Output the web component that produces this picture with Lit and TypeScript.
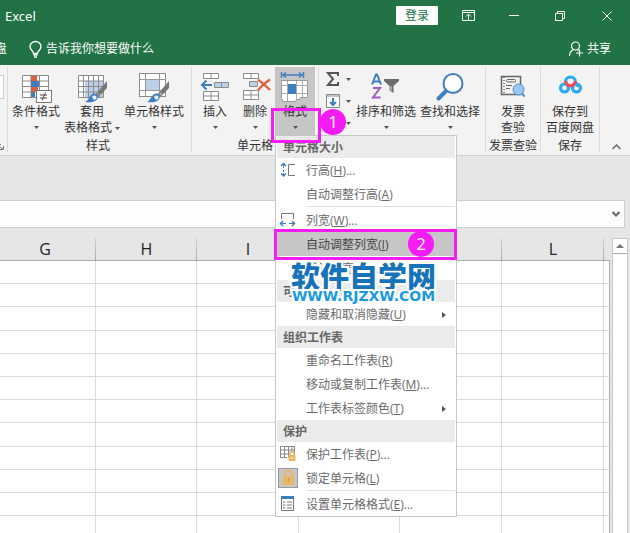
import { LitElement, html, css, svg, nothing } from "lit";
import { customElement } from "lit/decorators.js";

const gridPath = (x: number, y: number, cw: number, ch: number, cols: number, rows: number) => {
  let d = "";
  for (let i = 0; i <= cols; i++) d += `M${x + i * cw} ${y}v${ch * rows}`;
  for (let j = 0; j <= rows; j++) d += `M${x} ${y + j * ch}h${cw * cols}`;
  return d;
};

const brush = svg`
  <path d="M31 7v7l-6.500 7-3-3z" fill="#777"/>
  <path d="M21 18.500l3.500 3-1.500 2-4-3.500z" fill="#8a8a8a"/>
  <path d="M9 28c4-1 4-8 9-8.500 4 0 5 4 2.500 6.500S13 28.500 9 28z" fill="#3f7fbf"/>
  <path d="M16 23c1-2 4-2 4.500 0s-1.500 3-3 2.500z" fill="#e6f0fa"/>`;

const icons: Record<string, unknown> = {
  cond: html`<svg width="32" height="30" viewBox="0 0 32 30" aria-hidden="true">
    <rect x="2.500" y="1.500" width="26" height="22" fill="#fff"/>
    <path d="M2.500 1.500h26v22h-26zM11 1v23M19.500 1v23M2 7h9M2 12.500h9M2 18h9M17 7h12M19 12.500h10" fill="none" stroke="#8b8b8b"/>
    <rect x="11" y="2" width="6" height="5" fill="#d9603b"/><rect x="11" y="7" width="8" height="6" fill="#3f7fbf"/>
    <rect x="11" y="13" width="7" height="5" fill="#d9603b"/><rect x="11" y="18" width="4" height="5" fill="#3f7fbf"/>
    <rect x="16.500" y="16.500" width="15" height="12" fill="#fff" stroke="#777"/>
    <path d="M20 21h7M20 24h7M25.500 18.500l-3.500 8" stroke="#444" fill="none"/></svg>`,
  table: html`<svg width="32" height="30" viewBox="0 0 32 30" aria-hidden="true">
    <rect x="2.500" y="1.500" width="25" height="22" fill="#fff"/><rect x="9" y="7" width="18" height="16" fill="#bcd0e8"/>
    <path d=${gridPath(2.5, 1.5, 5, 5.5, 5, 4)} stroke="#8b8b8b" fill="none"/>${brush}</svg>`,
  style: html`<svg width="32" height="30" viewBox="0 0 32 30" aria-hidden="true">
    <rect x="1.500" y="-.5" width="26" height="23" fill="#fff" stroke="#8b8b8b"/>
    <path d="M7.500 0v22M21.500 0v22M2 5.500h26M2 16.500h26" stroke="#999" fill="none"/>
    <rect x="8" y="6" width="13" height="10" fill="#bcd0e8"/>${brush}</svg>`,
  insert: html`<svg width="32" height="30" viewBox="0 0 32 30" aria-hidden="true">
    <path d="M4.500-.5h15v5h-15zM12-.5v5M4.500 17.500h15v9h-15zM12 17.500v9M4.500 22h15" fill="#fff" stroke="#8b8b8b"/>
    <path d="M15.500 8.500h14v5h-14z" fill="#bcd0e8" stroke="#8b8b8b"/><path d="M22.500 8.500v5" stroke="#8b8b8b"/>
    <path d="M13 11H3.500M7.500 6.500L3 11l4.500 4.500" fill="none" stroke="#3f7fbf" stroke-width="2"/></svg>`,
  remove: html`<svg width="32" height="30" viewBox="0 0 32 30" aria-hidden="true">
    <path d="M4.500-.5h15v5h-15zM12-.5v5M4.500 16.500h15v9h-15zM12 16.500v9M4.500 21h15" fill="#fff" stroke="#8b8b8b"/>
    <path d="M10.500 7.500h8v5h-8z" fill="#bcd0e8" stroke="#8b8b8b"/>
    <path d="M19 5.500C23 9 27 12 31 16M31 5.500C26 9 22 12 19 16.500" fill="none" stroke="#d9603b" stroke-width="2.200"/></svg>`,
  format: html`<svg width="32" height="30" viewBox="0 0 32 30" aria-hidden="true">
    <path d="M2.500-2v6M24.500-2v6M4 1h19M7-1.500L4 1l3 2.500M20-1.500L23 1l-3 2.500" fill="none" stroke="#3f7fbf" stroke-width="1.500"/>
    <path d="M2.500 6.500h26v17h-7l-1 2h-3l-1 2H4l-1.500-3z" fill="#fff" stroke="#999"/>
    <path d="M8.500 7v20M17.500 7v18M23.500 7v16M3 11.500h25M3 19.500h25" stroke="#aaa" fill="none"/>
    <rect x="9" y="10" width="8" height="10" fill="#3f7fbf"/></svg>`,
  sort: html`<svg width="32" height="30" viewBox="0 0 32 30" aria-hidden="true">
    <path d="M2 10.500L6 .5h1l4 10M3.500 7.500h6" fill="none" stroke="#3f7fbf" stroke-width="2"/>
    <path d="M3 14h7L3 23.500h7.500" fill="none" stroke="#9b5fc0" stroke-width="2"/>
    <path d="M14 5h15v2l-5.500 5v7l-4-2.500V12L14 7z" fill="#6d6d6d"/><path d="M21 12v5" stroke="#ddd"/></svg>`,
  find: html`<svg width="32" height="30" viewBox="0 0 32 30" aria-hidden="true">
    <path d="M12.500 16.500L4.500 24.500" stroke="#3f7fbf" stroke-width="4" stroke-linecap="round"/>
    <circle cx="19" cy="9.500" r="9.500" fill="#fff" stroke="#3f7fbf" stroke-width="2"/></svg>`,
  invoice: html`<svg width="32" height="30" viewBox="0 0 32 30" aria-hidden="true">
    <path d="M4.500 2.500h19v18h-19z" fill="#f3f3f3" stroke="#666" stroke-width="1.500"/>
    <path d="M7 3v17" stroke="#666" stroke-dasharray="1 2" stroke-width="1.500"/>
    <rect x="9.500" y="5.500" width="9" height="2.500" rx="1" fill="none" stroke="#666"/><path d="M9 11.500h6M9 14.500h4" stroke="#666"/>
    <circle cx="21.500" cy="15.500" r="5.500" fill="#9cc7ee" stroke="#4a8fc9"/><path d="M25 19.500l2.500 3" stroke="#4a8fc9" stroke-width="2"/></svg>`,
  netdisk: html`<svg width="32" height="30" viewBox="0 0 32 30" aria-hidden="true" fill="none" stroke-width="3.200">
    <path d="M11.500 8a5 5 0 0 1 10 0c0 2.500 2 3.500 3.500 4" stroke="#2aaaf0"/>
    <circle cx="10.500" cy="14" r="4" stroke="#2aaaf0"/><circle cx="22.500" cy="14" r="4" stroke="#2aaaf0"/>
    <path d="M11.700 7a4.800 4.800 0 1 0 9.600 0" stroke="#ee4b62"/></svg>`,
  rowH: html`<svg width="24" height="20" viewBox="0 0 24 20" aria-hidden="true" fill="none">
    <path d="M7.500 3v11" stroke="#3f7fbf" stroke-dasharray="4 2 2 1"/><path d="M5 5l2.500-2.500L10 5M5 12.500L7.500 15l2.500-2.500" stroke="#3f7fbf" stroke-width="1.500"/>
    <path d="M19 3.500h-6.500v11H19" stroke="#777"/></svg>`,
  colW: html`<svg width="24" height="20" viewBox="0 0 24 20" aria-hidden="true" fill="none">
    <path d="M5.500 8V2.500h12V8" stroke="#777"/><path d="M5 12.500h5M13 12.500h5" stroke="#3f7fbf"/>
    <path d="M7 10l-2.500 2.500L7 15M16 10l2.500 2.500L16 15" stroke="#3f7fbf" stroke-width="1.500"/></svg>`,
  sheet: html`<svg width="24" height="20" viewBox="0 0 24 20" aria-hidden="true">
    <path d="M4.500 1.500h14v9M4.500 1.500v11M8.500 1.500v11M12.500 1.500v11M16 1.500v6M4 5h15M4 9h9M4 12.500h7" fill="none" stroke="#888"/>
    <rect x="12.500" y="10" width="7" height="6" fill="#eab765"/><path d="M14 10V8.500a2 2 0 0 1 4 0V10" fill="none" stroke="#eab765" stroke-width="1.500"/><path d="M16 12v2" stroke="#fff"/></svg>`,
  lock: html`<svg width="24" height="20" viewBox="0 0 24 20" aria-hidden="true">
    <rect x="2.500" y="-.5" width="19" height="19" fill="#c6c6c6" stroke="#9a9a9a"/>
    <rect x="7" y="7" width="11" height="9" fill="#eab765"/><path d="M9 7V5.500a3.500 3.500 0 0 1 7 0V7" fill="none" stroke="#eab765" stroke-width="2"/><path d="M12.500 9v4" stroke="#c9a15e" stroke-width="1.500"/></svg>`,
  cells: html`<svg width="24" height="20" viewBox="0 0 24 20" aria-hidden="true">
    <path d="M5.500 2.500h12v13h-12z" fill="#fff" stroke="#777"/><path d="M5 2.500h13" stroke="#3f7fbf" stroke-width="3"/>
    <path d="M7 7h2.500M7 10h2.500M7 13h2.500M11 7h5M11 10h5M11 13h5" stroke="#777"/></svg>`,
};

const arrow = html`<svg class="arrow" width="5" height="3" viewBox="0 0 5 3" aria-hidden="true"><path d="M0 0h5L2.500 3z" fill="#555"/></svg>`;

type Entry =
  | { kind: "head"; text: string }
  | { kind: "sep" }
  | { kind: "item"; text: string; key: string; dots?: boolean; icon?: string; sub?: boolean; active?: boolean };

const entries: Entry[] = [
  { kind: "head", text: "单元格大小" },
  { kind: "item", text: "行高", key: "H", dots: true, icon: "rowH" },
  { kind: "item", text: "自动调整行高", key: "A" },
  { kind: "sep" },
  { kind: "item", text: "列宽", key: "W", dots: true, icon: "colW" },
  { kind: "item", text: "自动调整列宽", key: "I", active: true },
  { kind: "item", text: "默认列宽", key: "D", dots: true },
  { kind: "head", text: "可见性" },
  { kind: "item", text: "隐藏和取消隐藏", key: "U", sub: true },
  { kind: "head", text: "组织工作表" },
  { kind: "item", text: "重命名工作表", key: "R" },
  { kind: "item", text: "移动或复制工作表", key: "M", dots: true },
  { kind: "item", text: "工作表标签颜色", key: "T", sub: true },
  { kind: "head", text: "保护" },
  { kind: "item", text: "保护工作表", key: "P", dots: true, icon: "sheet" },
  { kind: "item", text: "锁定单元格", key: "L", icon: "lock" },
  { kind: "sep" },
  { kind: "item", text: "设置单元格格式", key: "E", dots: true, icon: "cells" },
];

@customElement("format-menu")
class FormatMenu extends LitElement {
  static styles = css`
    :host { display: block; color: #6a6a6a; }
    .menu { box-sizing: border-box; width: 182px; background: #fff; border: 1px solid #c6c6c6; }
    .head { box-sizing: border-box; height: 22px; line-height: 22px; margin: 0 1px; padding: 1px 0 0 6px; background: #ebebeb; font-weight: 700; color: #666; }
    .sep { height: 1px; margin: 0 1px 1px 31px; background: #e1e1e1; }
    .row { position: relative; }
    .item { box-sizing: border-box; display: flex; align-items: center; gap: 6px; width: 100%; height: 24px; padding: 2px 10px 0 0; border: 0; background: none; font: inherit; color: inherit; text-align: left; white-space: nowrap; }
    .icon { flex: none; display: flex; width: 24px; height: 20px; }
    .icon svg { overflow: visible; }
    .label { flex: 1; font-family: "Open Sans", "Noto Sans CJK SC", sans-serif; }
    .active .item { background: #c6c6c6; color: #444; }
    .mark { position: absolute; inset: -3px -1px -4px -2px; border: 3px solid #f51bf5; pointer-events: none; }
    .badge { position: absolute; right: 22px; top: -1px; width: 26px; height: 26px; border-radius: 50%; background: #f51bf5; color: #fff; font-size: 16px; line-height: 26px; text-align: center; }
  `;
  render() {
    return html`<div class="menu" role="menu">${entries.map((e) => {
      if (e.kind === "head") return html`<div class="head">${e.text}</div>`;
      if (e.kind === "sep") return html`<div class="sep" role="separator"></div>`;
      return html`<div class="row ${e.active ? "active" : ""}">
        <button class="item" role="menuitem"><span class="icon">${e.icon ? icons[e.icon] : nothing}</span><span class="label">${e.text}(<u>${e.key}</u>)${e.dots ? "..." : ""}</span>${e.sub
          ? html`<svg width="4" height="6" viewBox="0 0 4 6" aria-hidden="true"><path d="M0 0l4 3-4 3z" fill="#555"/></svg>` : nothing}</button>
        ${e.active ? html`<div class="mark"></div><div class="badge">2</div>` : nothing}
      </div>`;
    })}</div>`;
  }
}

@customElement("app-root")
class AppRoot extends LitElement {
  static styles = css`
    :host { display: flex; flex-direction: column; height: 100vh; overflow: hidden; background: #e6e6e6; color: #333; font: 12px/16px "Noto Sans", "Noto Sans CJK SC", sans-serif; }
    button { font: inherit; color: inherit; border: 0; padding: 0; background: none; }
    svg { display: block; flex: none; overflow: visible; }
    .title { display: flex; align-items: center; height: 31px; padding-left: 5px; background: #217346; color: #fff; }
    .name { flex: 1; font-size: 13px; }
    .login { width: 42px; height: 19px; margin-right: 7px; background: #fff; color: #217346; border-radius: 1px; line-height: 18px; }
    .win { display: flex; align-items: center; justify-content: center; width: 46px; height: 31px; }
    .win:last-child { width: 47px; }
    .tabs { display: flex; align-items: center; height: 34px; padding: 2px 19px 0 0; box-sizing: border-box; background: #217346; color: #fff; }
    .tab { width: 7px; display: flex; justify-content: flex-end; overflow: hidden; white-space: nowrap; }
    .tell { display: flex; align-items: center; gap: 4px; margin-left: 22px; }
    .share { display: flex; align-items: center; gap: 4px; margin-left: auto; }
    .ribbon { display: flex; height: 90px; background: #f3f3f3; border-bottom: 1px solid #d2d2d2; }
    .group { box-sizing: border-box; display: flex; flex-direction: column; margin: 2px 0 3px; padding: 0 3px; border-right: 1px solid #dadada; }
    .edge { width: 8px; padding: 8px 0 2px; justify-content: space-between; }
    .format-group { padding-left: 0; }
    .tight { padding: 0; }
    .box { width: 3px; height: 22px; background: #fff; border: 1px solid #ccc; border-left: 0; }
    .tools { display: flex; flex: 1; }
    .caption { text-align: center; height: 14px; line-height: 16px; white-space: nowrap; }
    .tool { display: flex; flex-direction: column; align-items: center; height: 68px; padding-top: 7px; width: 40px; white-space: nowrap; box-sizing: border-box; }
    .tool > .arrow { margin-top: 6px; }
    .line { display: flex; align-items: center; gap: 3px; }
    .w48 { width: 54px; }
    .w56 { width: 56px; }
    .w58 { width: 58px; }
    .w64 { width: 64px; }
    .w68 { width: 68px; }
    .on { background: #c6c6c6; }
    .small { display: flex; flex-direction: column; gap: 6px; width: 32px; padding: 4px 0 0 4px; box-sizing: border-box; }
    .mini { display: flex; align-items: center; gap: 6px; height: 16px; }
    .anchor { position: relative; z-index: 2; }
    .pop { position: absolute; left: 0; top: 68px; }
    .mark { position: absolute; left: -4px; top: 41px; width: 44px; height: 29px; border: 3px solid #f51bf5; pointer-events: none; }
    .badge { position: absolute; left: 45px; top: 42px; width: 26px; height: 26px; border-radius: 50%; background: #f51bf5; color: #fff; font-size: 16px; line-height: 26px; text-align: center; }
    .brand { position: absolute; left: 16px; top: 192px; display: flex; flex-direction: column; align-items: center; white-space: nowrap; pointer-events: none; paint-order: stroke fill; -webkit-text-stroke: 4px #fff; }
    .brand-name { font: 900 29px/32px "Noto Sans CJK SC", sans-serif; color: #1673b9; }
    .brand-site { font: 700 14px/16px "DejaVu Sans", sans-serif; color: #1a9ae0; margin-top: -3px; }
    .fold { margin: auto 9px 5px auto; }
    .formula { display: flex; align-items: center; margin: 44px 5px 0 0; height: 26px; border: 1px solid #cfcfcf; border-left: 0; background: #fdfdfd; }
    .fx { flex: 1; min-width: 0; height: 24px; border: 0; padding: 0; background: none; outline: 0; font: inherit; }
    .expand { padding: 0 4px; }
    .work { display: flex; flex: 1; min-height: 0; padding: 10px 2px 0 0; }
    .sheet { display: flex; justify-content: flex-end; flex: 1; min-width: 0; overflow: hidden; }
    .cells { flex: none; width: calc(100% + 6px); table-layout: fixed; border-collapse: separate; border-spacing: 0; }
    .cells th { box-sizing: border-box; height: 23px; padding: 0; font-size: 16px; line-height: 20px; font-weight: 400; font-family: "Open Sans", sans-serif; color: #222; border-bottom: 1px solid #ababab; background: linear-gradient(#d4d4d4, #a8a8a8) right / 1px 100% no-repeat; }
    .cells th:last-child { background: none; }
    .cells td { box-sizing: border-box; height: 23px; padding: 0; background: #fff; border-right: 1px solid #dcdcdc; border-bottom: 1px solid #dcdcdc; }
    .cells tr:nth-child(5n + 3) td { height: 24px; }
    .cells td:last-child { border-right-color: #ababab; }
    .c101 { width: 101px; }
    .c102 { width: 102px; }
    .scroll { display: flex; flex-direction: column; width: 14px; margin: 0 0 0 2px; border: 1px solid #c6c6c6; border-bottom: 0; background: #fff; }
    .up { display: flex; align-items: center; justify-content: center; height: 15px; border-bottom: 1px solid #ababab; }
  `;

  tool(icon: string, lines: string[], width = "", mode: "below" | "inline" | "none" = "below") {
    return html`<button class="tool ${width}">${icons[icon]}${lines.map((t, i) =>
      mode === "inline" && i === lines.length - 1 ? html`<span class="line">${t}${arrow}</span>` : html`<span class="text">${t}</span>`)}${mode === "below" ? arrow : nothing}</button>`;
  }

  render() {
    return html`
      <header class="title">
        <span class="name">Excel</span>
        <button class="login">登录</button>
        <button class="win" aria-label="功能区显示选项"><svg width="13" height="11" viewBox="0 0 13 11" fill="none" stroke="#fff"><path d="M.5.5h12v10H.5zM.5 2.500h12M6.500 10V4.500M4 6.500L6.500 4 9 6.500"/></svg></button>
        <button class="win" aria-label="最小化"><svg width="10" height="1" viewBox="0 0 10 1"><path d="M0 .5h10" stroke="#fff"/></svg></button>
        <button class="win" aria-label="还原"><svg width="10" height="10" viewBox="0 0 10 10" fill="none" stroke="#fff"><path d="M.5 2.500h7v7h-7zM2.500 2V.5h7v7H8"/></svg></button>
        <button class="win" aria-label="关闭"><svg width="10" height="10" viewBox="0 0 10 10" stroke="#fff"><path d="M.5.5l9 9M9.500.5l-9 9"/></svg></button>
      </header>
      <nav class="tabs">
        <button class="tab">百度网盘</button>
        <button class="tell"><svg width="13" height="17" viewBox="0 0 13 17" fill="none" stroke="#fff" stroke-width="1.300"><path d="M4.500 12.500c0-3-3.500-3-3.500-7a5.500 5 0 0 1 11 0c0 4-3.500 4-3.500 7zM4.500 14h4M5 16h3"/></svg>告诉我你想要做什么</button>
        <button class="share"><svg width="14" height="16" viewBox="0 0 14 16" fill="none" stroke="#fff" stroke-width="1.200"><circle cx="6.500" cy="5" r="4"/><path d="M.5 15c0-4 2-5.500 4-6.500M8.500 8.500l1 1M7 12h7M10.500 8.500v7"/></svg>共享</button>
      </nav>
      <section class="ribbon">
        <div class="group edge"><div class="box"></div><svg width="4" height="6" viewBox="0 0 4 6" fill="none" stroke="#777"><path d="M0 .5h1M0 3l3 2.500M3.500 2v3.500H0"/></svg></div>
        <div class="group format-group">
          <div class="tools">${this.tool("cond", ["条件格式"], "w56")}${this.tool("table", ["套用", "表格格式"], "w56", "inline")}${this.tool("style", ["单元格样式"], "w68")}</div>
          <div class="caption">样式</div>
        </div>
        <div class="group">
          <div class="tools">${this.tool("insert", ["插入"])}${this.tool("remove", ["删除"])}
            <div class="anchor">
              ${this.tool("format", ["格式"], "on")}
              <format-menu class="pop"></format-menu>
              <div class="mark"></div><div class="badge">1</div>
              <div class="brand"><span class="brand-name">软件自学网</span><span class="brand-site">WWW.RJZXW.COM</span></div>
            </div>
          </div>
          <div class="caption">单元格</div>
        </div>
        <div class="group">
          <div class="tools">
            <div class="small">
              <button class="mini" aria-label="自动求和"><svg width="14" height="14" viewBox="0 0 14 14" fill="none" stroke="#555" stroke-width="2"><path d="M12 4V1H2l5 6-5 6h10v-3"/></svg>${arrow}</button>
              <button class="mini" aria-label="填充"><svg width="14" height="14" viewBox="0 0 14 14" fill="none"><path d="M.5.5h13v13H.5z" fill="#fff" stroke="#888"/><path d="M1 2h12" stroke="#888"/><path d="M7 4v7M4 8l3 3 3-3" stroke="#3f7fbf" stroke-width="2"/></svg>${arrow}</button>
              <button class="mini" aria-label="清除"><svg width="14" height="14" viewBox="0 0 14 14"><path d="M1 9l6-7 6 4-6 7H4z" fill="#c77bb5"/></svg>${arrow}</button>
            </div>
            ${this.tool("sort", ["排序和筛选"], "w64")}${this.tool("find", ["查找和选择"], "w64")}
          </div>
          <div class="caption">编辑</div>
        </div>
        <div class="group tight">
          <div class="tools">${this.tool("invoice", ["发票", "查验"], "w48", "none")}</div>
          <div class="caption">发票查验</div>
        </div>
        <div class="group tight">
          <div class="tools">${this.tool("netdisk", ["保存到", "百度网盘"], "w58", "none")}</div>
          <div class="caption">保存</div>
        </div>
        <button class="fold" aria-label="折叠功能区"><svg width="9" height="6" viewBox="0 0 9 6" fill="none" stroke="#666" stroke-width="1.500"><path d="M.5 5l4-4 4 4"/></svg></button>
      </section>
      <div class="formula">
        <input class="fx" aria-label="编辑栏" />
        <button class="expand" aria-label="展开编辑栏"><svg width="8" height="6" viewBox="0 0 8 6" fill="none" stroke="#666" stroke-width="2"><path d="M.5 1L4 4.500 7.500 1"/></svg></button>
      </div>
      <main class="work">
        <div class="sheet">
          <table class="cells">
            <colgroup><col class="c102" /><col class="c101" /><col class="c102" /><col class="c101" /><col class="c102" /><col class="c102" /><col /></colgroup>
            <thead><tr>${["G", "H", "I", "J", "K", "L", ""].map((c) => html`<th scope="col">${c}</th>`)}</tr></thead>
            <tbody>${Array.from({ length: 40 }, () => html`<tr>${Array.from({ length: 7 }, () => html`<td></td>`)}</tr>`)}</tbody>
          </table>
        </div>
        <div class="scroll"><button class="up" aria-label="向上滚动"><svg width="8" height="4" viewBox="0 0 8 4"><path d="M0 4l4-4 4 4z" fill="#777"/></svg></button></div>
      </main>`;
  }
}
